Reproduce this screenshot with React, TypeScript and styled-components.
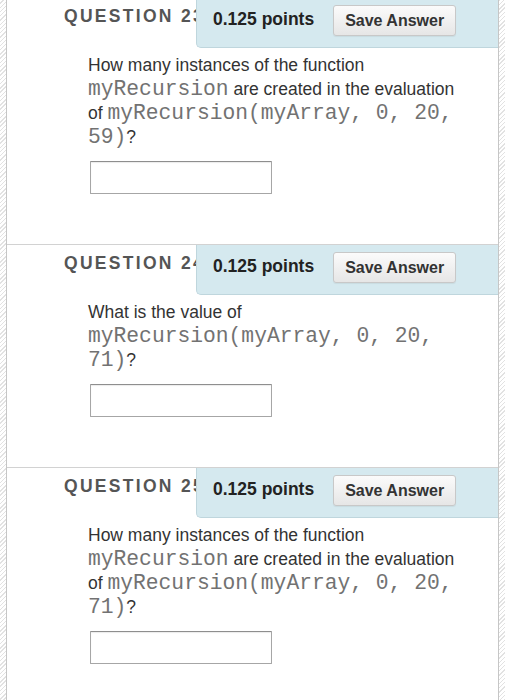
import React from "react";
import styled, { createGlobalStyle } from "styled-components";

const GlobalStyle = createGlobalStyle`
  html, body {
    margin: 0;
    padding: 0;
  }
  body {
    background-color: #ffffff;
    background-image: repeating-linear-gradient(
      135deg,
      #ffffff 0px,
      #ffffff 2px,
      #e2e2e2 2px,
      #e2e2e2 3px
    );
    font-family: "Liberation Sans", Arial, sans-serif;
    overflow: hidden;
  }
`;

const Page = styled.main`
  margin: -2px 6px 0;
  background: #ffffff;
  border-left: 1px solid #c6c6c6;
  border-right: 1px solid #c6c6c6;
  min-height: 720px;
`;

const Question = styled.section`
  border-bottom: 1px solid #d2d2d2;
`;

const Header = styled.div`
  display: flex;
  height: 50px;
`;

const Title = styled.h3`
  flex: 0 0 189px;
  box-sizing: border-box;
  margin: 0;
  padding: 8px 0 0 57px;
  overflow: hidden;
  white-space: nowrap;
  font-size: 17.5px;
  line-height: 20px;
  font-weight: bold;
  letter-spacing: 2.3px;
  color: #555555;
  text-transform: uppercase;
`;

const PointsBar = styled.div`
  flex: 1;
  display: flex;
  align-items: center;
  padding: 0 0 4px 16px;
  background: #d5e9ef;
  border-left: 1px solid #bfd6dd;
  border-bottom: 1px solid #bfd6dd;
  border-bottom-left-radius: 5px;
`;

const Points = styled.span`
  font-size: 17.5px;
  font-weight: bold;
  color: #222222;
  margin-bottom: 3px;
`;

const SaveButton = styled.button`
  margin-left: 19px;
  width: 123px;
  height: 31px;
  padding: 0;
  font-family: "Liberation Sans", Arial, sans-serif;
  font-size: 16px;
  font-weight: bold;
  color: #333333;
  background: linear-gradient(#fbfbfb, #e6e6e6);
  border: 1px solid #c8c8c8;
  border-radius: 3px;
  box-shadow: 0 1px 1px rgba(0, 0, 0, 0.06);
`;

const Body = styled.div`
  padding: 5px 0 50px 81px;
`;

const Prompt = styled.p`
  margin: 0;
  width: 382px;
  font-size: 17.5px;
  line-height: 24px;
  color: #333333;
`;

const Code = styled.span`
  font-family: "Liberation Mono", "Courier New", monospace;
  font-size: 21.3px;
  line-height: 1;
  color: #727272;
`;

const AnswerInput = styled.input`
  display: block;
  box-sizing: border-box;
  margin: 12px 0 0 2px;
  width: 182px;
  height: 33px;
  border: 1px solid #a6a6a6;
  border-top-color: #8e8e8e;
  border-radius: 1px;
  box-shadow: inset 0 1px 1px rgba(0, 0, 0, 0.08);
  background: #ffffff;
`;

type Q = { num: number; content: React.ReactNode };

const questions: Q[] = [
  {
    num: 23,
    content: (
      <>
        How many instances of the function <Code>myRecursion</Code> are created
        in the evaluation of <Code>myRecursion(myArray, 0, 20, 59)</Code>?
      </>
    ),
  },
  {
    num: 24,
    content: (
      <>
        What is the value of <Code>myRecursion(myArray, 0, 20, 71)</Code>?
      </>
    ),
  },
  {
    num: 25,
    content: (
      <>
        How many instances of the function <Code>myRecursion</Code> are created
        in the evaluation of <Code>myRecursion(myArray, 0, 20, 71)</Code>?
      </>
    ),
  },
];

export default function App() {
  return (
    <>
      <GlobalStyle />
      <Page>
        {questions.map((q) => (
          <Question key={q.num}>
            <Header>
              <Title>Question {q.num}</Title>
              <PointsBar>
                <Points>0.125 points</Points>
                <SaveButton type="button">Save Answer</SaveButton>
              </PointsBar>
            </Header>
            <Body>
              <Prompt>{q.content}</Prompt>
              <AnswerInput type="text" aria-label={`Answer ${q.num}`} />
            </Body>
          </Question>
        ))}
      </Page>
    </>
  );
}
